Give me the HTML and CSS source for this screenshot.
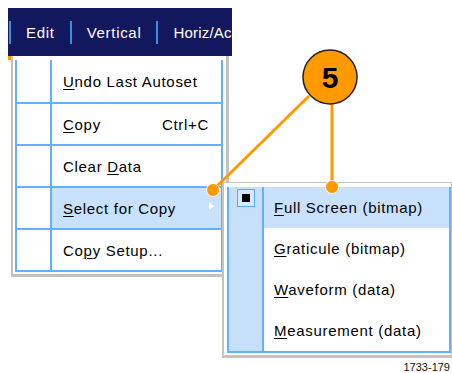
FILE: index.html
```html
<!DOCTYPE html>
<html lang="en">
<head>
    <meta charset="UTF-8">
    <title>Select for Copy</title>
    <link rel="stylesheet" href="styles.css">
</head>
<body>

<div class="page">

    <div class="menubar">
        <span class="menubar-item">Edit</span>
        <span class="menubar-item">Vertical</span>
        <span class="menubar-item tight">Horiz/Ac</span>
    </div>

    <div class="menu">
        <ul class="menu-list">
            <li class="item"><span class="icon"></span><span class="label"><span><u>U</u>ndo Last Autoset</span></span></li>
            <li class="item"><span class="icon"></span><span class="label"><span><u>C</u>opy</span><span class="shortcut">Ctrl+C</span></span></li>
            <li class="item"><span class="icon"></span><span class="label"><span>Clear <u>D</u>ata</span></span></li>
            <li class="item active"><span class="icon"></span><span class="label"><span><u>S</u>elect for Copy</span><span class="arrow"></span></span></li>
            <li class="item"><span class="icon"></span><span class="label"><span>Co<u>p</u>y Setup...</span></span></li>
        </ul>
    </div>

    <div class="fig-number">1733-179</div>

    <div class="submenu">
        <ul class="sub-list">
            <li class="item active"><span class="icon"><span class="check"></span></span><span class="label"><span><u>F</u>ull Screen (bitmap)</span></span></li>
            <li class="item"><span class="icon"></span><span class="label"><span><u>G</u>raticule (bitmap)</span></span></li>
            <li class="item"><span class="icon"></span><span class="label"><span><u>W</u>aveform (data)</span></span></li>
            <li class="item"><span class="icon"></span><span class="label"><span><u>M</u>easurement (data)</span></span></li>
        </ul>
    </div>

    <svg class="callout" width="452" height="373" viewBox="0 0 452 373">
        <rect x="8" y="56" width="3" height="4" fill="#ff9900"/>
        <line x1="309" y1="96" x2="213" y2="190" stroke="#ff9900" stroke-width="3"/>
        <line x1="332" y1="100" x2="332" y2="187" stroke="#ff9900" stroke-width="3"/>
        <circle cx="213" cy="190" r="6.5" fill="#ff9900" stroke="#fff" stroke-width="1"/>
        <circle cx="332" cy="187" r="6.5" fill="#ff9900" stroke="#fff" stroke-width="1"/>
        <circle cx="330" cy="77" r="27" fill="#ff9900" stroke="#222" stroke-width="1.5"/>
        <text x="330" y="88" text-anchor="middle" class="callout-num">5</text>
    </svg>

</div>

</body>
</html>
```

FILE: styles.css
```css
body {
    margin: 0;
    background-color: #fff;
    font-family: "Liberation Sans", Arial, sans-serif;
}

.page {
    position: relative;
    width: 452px;
    height: 373px;
    padding-top: 8px;
    box-sizing: border-box;
    overflow: hidden;
}

ul {
    list-style: none;
    margin: 0;
    padding: 0;
}

u {
    text-decoration-thickness: 1px;
    text-underline-offset: 2px;
}

/* top menu bar */

.menubar {
    margin-left: 8px;
    width: 224px;
    height: 48px;
    padding-left: 1px;
    box-sizing: border-box;
    background-color: #13175e;
    display: flex;
    align-items: center;
    overflow: hidden;
}

.menubar-item {
    flex-shrink: 0;
    height: 23px;
    line-height: 23px;
    padding: 0 15px;
    border-left: 2px solid #3a8ee6;
    color: #fff;
    font-size: 15px;
    letter-spacing: 0.7px;
    white-space: nowrap;
}

.menubar-item.tight {
    padding-right: 0;
    letter-spacing: 0.2px;
}

/* dropdown */

.menu {
    width: 218px;
    margin-left: 11px;
    box-sizing: border-box;
    background-color: #fff;
    border-left: 2px solid #c4c4bc;
    border-right: 3px solid #c4c4bc;
    border-bottom: 3px solid #c4c4bc;
    padding: 4px 3px 2px 2px;
}

.menu-list,
.sub-list {
    border: 2px solid #66afff;
    border-top: none;
}

.item {
    display: flex;
    height: 40px;
    font-size: 15px;
    letter-spacing: 0.7px;
    color: #000;
}

.menu-list .item {
    border-top: 2px solid #66afff;
}

.menu-list .item:first-child {
    border-top: none;
    height: 42px;
}

.icon {
    width: 33px;
    flex-shrink: 0;
    border-right: 2px solid #66afff;
}

.label {
    flex: 1;
    display: flex;
    align-items: center;
    padding: 0 12px 0 11px;
    white-space: nowrap;
}

.item.active .label {
    background-color: #c8e1fc;
}

.shortcut {
    margin-left: auto;
}

.arrow {
    margin-left: auto;
    margin-right: -5px;
    margin-top: -4px;
    width: 0;
    height: 0;
    border-top: 4px solid transparent;
    border-bottom: 4px solid transparent;
    border-left: 5px solid #fff;
}

/* fly-out submenu */

.submenu {
    position: absolute;
    left: 222px;
    top: 182px;
    width: 230px;
    box-sizing: border-box;
    background-color: #fff;
    border-top: 1px solid #c4c4bc;
    border-left: 2px solid #c4c4bc;
    border-right: 1px solid #c4c4bc;
    border-bottom: 3px solid #c4c4bc;
    padding: 4px 0 2px 3px;
}

.sub-list .item {
    height: 41px;
}

.sub-list .icon {
    background-color: #c7e0fa;
    display: flex;
    justify-content: center;
    align-items: flex-start;
}

.sub-list .label {
    padding-left: 10px;
}

.check {
    margin-top: 2px;
    width: 18px;
    height: 18px;
    box-sizing: border-box;
    border: 1px solid #5aa8ff;
    background-color: #d8eafd;
    display: flex;
    align-items: center;
    justify-content: center;
}

.check::after {
    content: "";
    width: 8px;
    height: 8px;
    background-color: #000;
}

/* figure number */

.fig-number {
    margin-top: 84px;
    padding-right: 2px;
    text-align: right;
    font-size: 11px;
    line-height: 12px;
    color: #111;
}

/* callout */

.callout {
    position: absolute;
    top: 0;
    left: 0;
    pointer-events: none;
}

.callout-num {
    font-family: "Liberation Sans", Arial, sans-serif;
    font-size: 30px;
    font-weight: bold;
    fill: #000;
}
```
